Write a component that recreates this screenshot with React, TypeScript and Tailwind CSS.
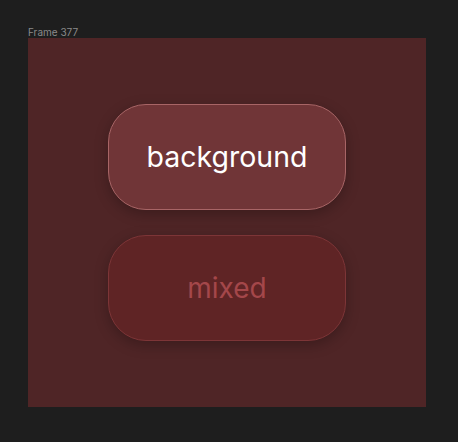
import React from "react";

export default function App() {
  return (
    <div className="w-[458px] h-[442px] bg-[#1e1e1e] relative" style={{ fontFamily: "Inter, 'Noto Sans', sans-serif" }}>
      <div className="pt-[26px] pl-[28px]">
        <div className="text-[10px] leading-[12px] text-[#8a8a8a]">Frame 377</div>
        <div className="w-[398px] h-[369px] bg-[#4f2526] flex flex-col items-center justify-center gap-[25px]">
          <div className="w-[238px] h-[106px] rounded-[38px] bg-[#703537] border-[1.5px] border-[#a86566] shadow-[0_4px_14px_rgba(0,0,0,0.25)] flex items-center justify-center">
            <span className="text-[28.5px] text-white">background</span>
          </div>
          <div className="w-[238px] h-[106px] rounded-[38px] bg-[#5f2425] border-[1.5px] border-[#7d3537] shadow-[0_4px_14px_rgba(0,0,0,0.25)] flex items-center justify-center">
            <span className="text-[28px] text-[#a4474a]">mixed</span>
          </div>
        </div>
      </div>
    </div>
  );
}
